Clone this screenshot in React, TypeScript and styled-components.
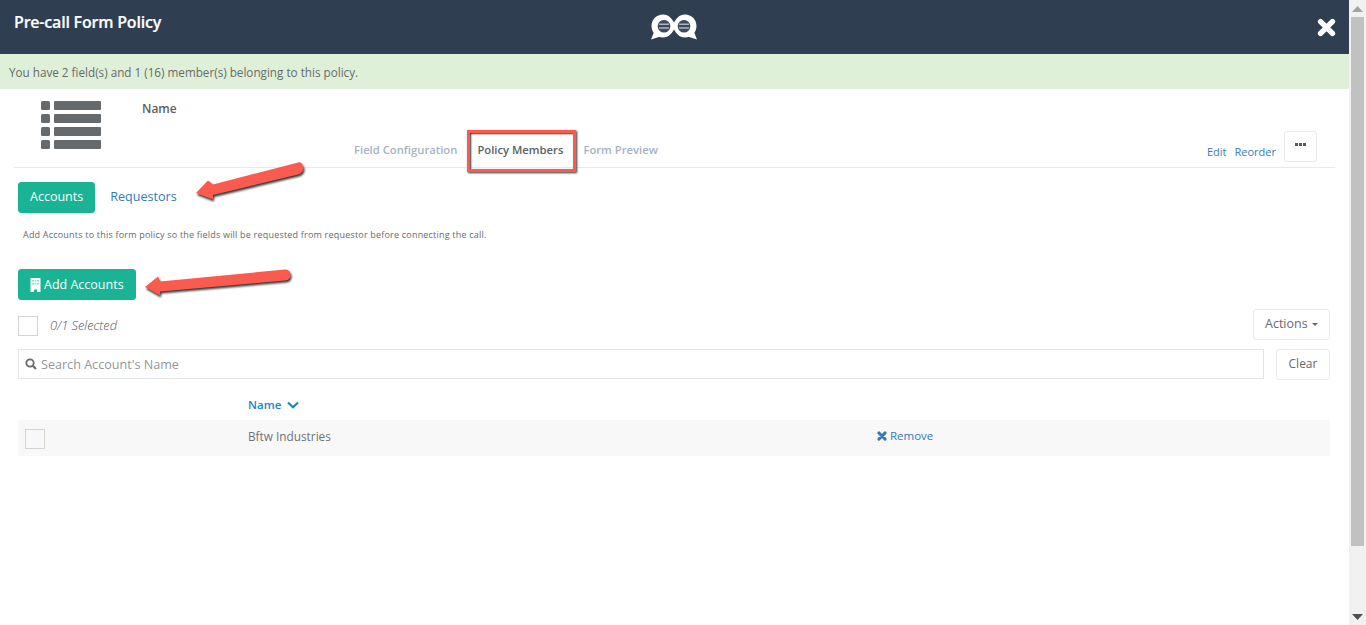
import React from "react";
import styled, { createGlobalStyle } from "styled-components";

const Global = createGlobalStyle`
  html, body { margin: 0; padding: 0; height: 100%; overflow: hidden; background: #fff; }
  body { font-family: "Open Sans", "Liberation Sans", sans-serif; color: #676a6c; }
  * { box-sizing: border-box; }
`;

const Page = styled.div`
  display: flex; width: 1366px; height: 625px; overflow: hidden; position: relative;
`;
const Main = styled.main`
  width: 1349px; height: 625px; display: flex; flex-direction: column;
`;
const Header = styled.header`
  height: 54px; background: #2f3e50; display: grid; grid-template-columns: 1fr auto 1fr; align-items: start; padding: 0 13px 0 14px; flex: none;
`;
const Title = styled.h1`
  margin: 11px 0 0; font-size: 16px; line-height: 22px; font-weight: 600; color: #fff; letter-spacing: -0.2px; -webkit-text-stroke: 0.2px #fff;
`;
const LogoWrap = styled.div`
  display: flex; padding-top: 14px; margin-right: 2px;
`;
const Close = styled.div`
  justify-self: end; padding-top: 18px; display: flex;
`;
const Banner = styled.div`
  height: 35px; flex: none; background: #dff0d8; padding-left: 9px; display: flex; align-items: center; font-size: 11.7px; color: #676a6c;
`;
const TopSection = styled.section`
  height: 79px; margin: 0 14px; border-bottom: 1px solid #e7eaec; display: flex; flex: none;
`;
const ListIconWrap = styled.div`
  width: 128px; padding: 12px 0 0 27px; display: flex; flex: none;
`;
const TopBody = styled.div`
  flex: 1; display: flex; flex-direction: column;
`;
const PolicyName = styled.div`
  font-size: 12px; font-weight: 600; line-height: 16px; margin-top: 12px; color: #5b5e60;
`;
const TabRow = styled.div`
  display: flex; align-items: flex-end; margin-top: 14px; padding-left: 212px; height: 36px;
`;
const Tab = styled.div<{ $active?: boolean }>`
  font-size: 11.25px; font-weight: 600; line-height: 16px; padding-bottom: 9px; margin-right: 20px;
  color: ${p => (p.$active ? "#5a5f63" : "#a7b1c2")};
`;
const TopActions = styled.div`
  margin: 0 0 5px auto; display: flex; align-items: flex-end; padding-right: 18px;
`;
const SmallLink = styled.a`
  font-size: 11px; line-height: 15px; color: #337ab7; margin-right: 8px; padding-bottom: 3px;
`;
const MoreButton = styled.button`
  width: 33px; height: 31px; background: #fff; border: 1px solid #e7eaec; border-radius: 3px; padding: 0 0 4px; display: flex; align-items: center; justify-content: center;
`;
const Content = styled.section`
  padding: 14px 19px 0 18px; flex: 1; display: flex; flex-direction: column;
`;
const PillRow = styled.div`
  display: flex; align-items: center; gap: 15px;
`;
const PrimaryButton = styled.button<{ $lift?: number }>`
  height: 31px; background: #1ab394; border: 1px solid #1ab394; border-radius: 3px; color: #fff; font: 400 12.5px "Open Sans", sans-serif; padding: 0 11px ${p => p.$lift ?? 2}px; display: inline-flex; align-items: center; gap: 3px; align-self: flex-start;
`;
const PillLink = styled.a`
  font-size: 12.6px; color: #337ab7; margin-bottom: 2px;
`;
const Help = styled.p`
  margin: 15px 0 0 5px; font-size: 9px; line-height: 13px; letter-spacing: 0.2px;
`;
const AddRow = styled.div`
  margin-top: 28px; display: flex;
`;
const SelectRow = styled.div`
  margin-top: 9px; display: flex; align-items: flex-start; height: 31px;
`;
const Check = styled.span`
  display: block; width: 20px; height: 20px; border: 1px solid #d5d5cf; background: #fff; flex: none; margin-top: 7px;
`;
const RowCheck = styled(Check)`
  margin: 0; height: 19.5px; background: #f8f8f8;
`;
const Selected = styled.em`
  font-size: 12.8px; line-height: 16px; font-weight: 300; margin: 8px 0 0 12px; color: #55585a;
`;
const OutlineButton = styled.button`
  height: 31px; background: #fff; border: 1px solid #e7eaec; border-radius: 3px; color: #676a6c; font: 400 12.5px "Open Sans", sans-serif; padding: 0 11px 2px; display: inline-flex; align-items: center; gap: 4px;
`;
const ActionsButton = styled(OutlineButton)`
  margin-left: auto; width: 77px;
`;
const Caret = styled.span`
  width: 0; height: 0; border-left: 3.5px solid transparent; border-right: 3.5px solid transparent; border-top: 3.5px solid #676a6c; margin-top: 2px;
`;
const SearchRow = styled.div`
  margin-top: 9px; display: flex; gap: 12px; align-items: flex-start;
`;
const SearchBox = styled.div`
  flex: 1; height: 30px; border: 1px solid #e5e6e7; background: #fff; display: flex; align-items: center; padding-left: 6px; gap: 4px;
`;
const SearchInput = styled.input`
  flex: 1; border: 0; outline: 0; background: transparent; font: 400 12.6px "Open Sans", sans-serif; color: #676a6c; padding: 0;
  &::placeholder { color: #949698; opacity: 1; }
`;
const ClearButton = styled(OutlineButton)`
  width: 54px; padding: 0 0 2px; justify-content: center; font-size: 12px;
`;
const TableHead = styled.div`
  margin-top: 14px; height: 26px; padding: 0 0 5px 230px; display: flex; align-items: center; gap: 6px; font-size: 11.5px; font-weight: 600; color: #1c84c6;
`;
const TableRow = styled.div`
  height: 36px; background: #f8f8f8; display: grid; grid-template-columns: 230px 629px 1fr; align-items: center; font-size: 11.8px;
`;
const CheckCell = styled.div`
  padding: 2px 0 0 7px;
`;
const Cell = styled.div`
  line-height: 16px; margin-top: -4px; color: #6f7274;
`;
const RemoveLink = styled.a`
  color: #337ab7; display: inline-flex; align-items: center; gap: 3px; font-size: 11.5px;
`;
const Scrollbar = styled.aside`
  width: 17px; height: 625px; background: #f1f1f1; display: flex; flex-direction: column; align-items: center; flex: none;
`;
const ScrollUp = styled.div`
  height: 17px; width: 100%; display: flex; align-items: center; justify-content: center; flex: none;
`;
const ScrollThumb = styled.div`
  width: 13px; height: 529px; background: #c1c1c1; flex: none;
`;
const ScrollDown = styled(ScrollUp)`
  margin-top: auto;
`;
const Annotation = styled.svg`
  position: absolute; left: 0; top: 0; pointer-events: none; overflow: visible;
  filter: drop-shadow(1px 2px 1.2px rgba(0, 0, 0, 0.8));
`;
const RedBox = styled.div`
  position: absolute; left: 467px; top: 130px; width: 109px; height: 42px; border: 3px solid #fb5a4e; box-shadow: 1px 1px 2px rgba(0,0,0,.8), inset 1px 1px 2px rgba(0,0,0,.8); pointer-events: none;
`;

const ListIcon = () => (
  <svg width="60" height="48" viewBox="0 0 60 48" fill="#676a6c">
    {[0, 13, 26, 39].map(y => (
      <g key={y}>
        <rect x="0" y={y} width="9" height="9" rx="1.5" />
        <rect x="13" y={y} width="47" height="9" rx="1" />
      </g>
    ))}
  </svg>
);

const Logo = () => (
  <svg width="46" height="26" viewBox="0 0 46 26">
    <path d="M3 18 L0 25.500 L9.500 22.500 Z M43 18 L46 25.500 L36.500 22.500 Z" fill="#fff" />
    <path d="M12 0.500 C18 0.500 21 5 23 8.500 C25 5 28 0.500 34 0.500 C40.500 0.500 45.500 5.500 45.500 12 C45.500 18.500 40.500 23.500 34 23.500 C28 23.500 25 19 23 15.500 C21 19 18 23.500 12 23.500 C5.500 23.500 0.500 18.500 0.500 12 C0.500 5.500 5.500 0.500 12 0.500 Z" fill="#fff" />
    <circle cx="13" cy="12.300" r="6.300" fill="#3b4a5c" />
    <circle cx="33" cy="12.300" r="6.300" fill="#3b4a5c" />
    <path d="M8 10.300 H18 M8 14 H18 M28 10.300 H38 M28 14 H38" stroke="#aeb6bf" strokeWidth="1.600" />
  </svg>
);

const Cross = ({ size, color }: { size: number; color: string }) => (
  <svg width={size} height={size} viewBox="0 0 16 16">
    <path d="M3 3 L13 13 M13 3 L3 13" stroke={color} strokeWidth="4.600" strokeLinecap="round" />
  </svg>
);

export default function App() {
  return (
    <Page>
      <Global />
      <Main>
        <Header>
          <Title>Pre-call Form Policy</Title>
          <LogoWrap><Logo /></LogoWrap>
          <Close><Cross size={19} color="#fff" /></Close>
        </Header>
        <Banner>You have 2 field(s) and 1 (16) member(s) belonging to this policy.</Banner>
        <TopSection>
          <ListIconWrap><ListIcon /></ListIconWrap>
          <TopBody>
            <PolicyName>Name</PolicyName>
            <TabRow>
              <Tab>Field Configuration</Tab>
              <Tab $active>Policy Members</Tab>
              <Tab>Form Preview</Tab>
              <TopActions>
                <SmallLink>Edit</SmallLink>
                <SmallLink>Reorder</SmallLink>
                <MoreButton>
                  <svg width="11" height="3" viewBox="0 0 11 3" fill="#55585c">
                    <rect x="0" width="3" height="3" /><rect x="4" width="3" height="3" /><rect x="8" width="3" height="3" />
                  </svg>
                </MoreButton>
              </TopActions>
            </TabRow>
          </TopBody>
        </TopSection>
        <Content>
          <PillRow>
            <PrimaryButton>Accounts</PrimaryButton>
            <PillLink>Requestors</PillLink>
          </PillRow>
          <Help>Add Accounts to this form policy so the fields will be requested from requestor before connecting the call.</Help>
          <AddRow>
            <PrimaryButton $lift={0}>
              <svg width="11" height="14" viewBox="0 0 11 14" fill="#fff">
                <path d="M0.500 0H10.500V14H7V11.500H4V14H0.500Z" />
                <path d="M2 2H4V3.500H2Z M4.700 2H6.300V3.500H4.700Z M7 2H9V3.500H7Z M2 5H4V6.500H2Z M4.700 5H6.300V6.500H4.700Z M7 5H9V6.500H7Z" fill="#8fdccb" />
              </svg>
              Add Accounts
            </PrimaryButton>
          </AddRow>
          <SelectRow>
            <Check />
            <Selected>0/1 Selected</Selected>
            <ActionsButton>Actions<Caret /></ActionsButton>
          </SelectRow>
          <SearchRow>
            <SearchBox>
              <svg width="12" height="12" viewBox="0 0 12 12" fill="none" stroke="#676a6c" strokeWidth="1.800">
                <circle cx="5" cy="5" r="3.700" /><path d="M7.800 7.800 L11 11" strokeWidth="2.200" />
              </svg>
              <SearchInput placeholder="Search Account's Name" readOnly />
            </SearchBox>
            <ClearButton>Clear</ClearButton>
          </SearchRow>
          <TableHead>
            Name
            <svg width="12" height="8" viewBox="0 0 12 8" fill="none" stroke="#1c84c6" strokeWidth="2.200"><path d="M1 1.500 L6 6.200 L11 1.500" /></svg>
          </TableHead>
          <TableRow>
            <CheckCell><RowCheck /></CheckCell>
            <Cell>Bftw Industries</Cell>
            <Cell>
              <RemoveLink><Cross size={10} color="#337ab7" />Remove</RemoveLink>
            </Cell>
          </TableRow>
        </Content>
      </Main>
      <Scrollbar>
        <ScrollUp>
          <svg width="11" height="6" viewBox="0 0 11 6" fill="#a3a3a3"><path d="M5.500 0 L11 6 H0 Z" /></svg>
        </ScrollUp>
        <ScrollThumb />
        <ScrollDown>
          <svg width="11" height="6" viewBox="0 0 11 6" fill="#505050"><path d="M0 0 H11 L5.500 6 Z" /></svg>
        </ScrollDown>
      </Scrollbar>
      <RedBox />
      <Annotation width="1366" height="625">
        <path d="M298 162.500 L213 184.500 L208 180.500 L196 193 L213 199.500 L213 195 L298 174.500 Q304 172.500 303.500 167.500 Q302 161.500 298 162.500 Z" fill="#fb5a4e" />
        <path d="M285 269.500 L160 281.500 L158 276.500 L145 287 L160 295.500 L160 291.500 L285 280.500 Q290.500 280 290.500 275 Q290.500 269.500 285 269.500 Z" fill="#fb5a4e" />
      </Annotation>
    </Page>
  );
}
